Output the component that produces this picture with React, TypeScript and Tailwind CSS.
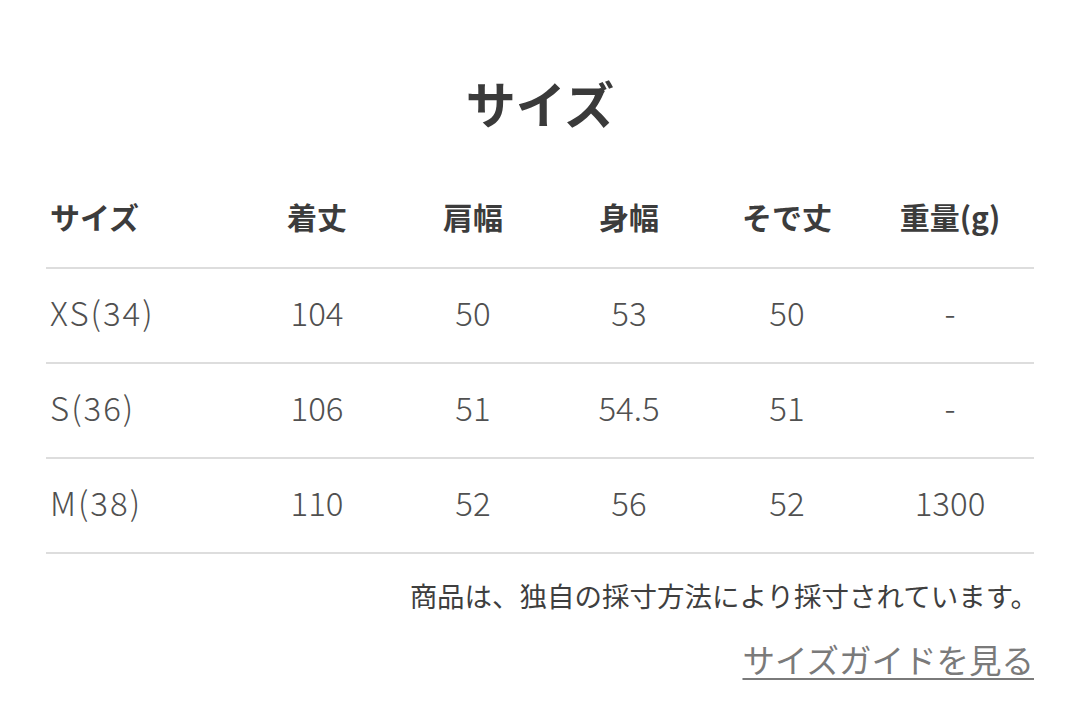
const headers = ["サイズ", "着丈", "肩幅", "身幅", "そで丈", "重量(g)"];

const rows = [
  ["XS(34)", "104", "50", "53", "50", "-"],
  ["S(36)", "106", "51", "54.5", "51", "-"],
  ["M(38)", "110", "52", "56", "52", "1300"],
];

const cols = "grid grid-cols-[192px_158px_154px_158px_158px_1fr]";

const App = () => {
  return (
    <div
      className="min-h-screen w-[1080px] bg-white px-[46px] pt-[71px] text-[#444444]"
      style={{ fontFamily: '"Noto Sans CJK JP", "Noto Sans", sans-serif' }}
    >
      {/* Title */}
      <h1 className="text-center text-[50px] font-bold leading-[62px] text-[#3a3a3a]">
        サイズ
      </h1>

      {/* Size table */}
      <div className="mt-[40px]">
        <div className={`${cols} h-[96px] items-center border-b-2 border-[#dddddd] pb-2`}>
          {headers.map((h, i) => (
            <div
              key={h}
              className={`text-[30px] font-bold text-[#3c3c3c] ${i === 0 ? "pl-1 text-left" : "text-center"}`}
            >
              {h}
            </div>
          ))}
        </div>
        {rows.map((row) => (
          <div
            key={row[0]}
            className={`${cols} h-[95px] items-center border-b-2 border-[#dddddd] pb-[6px]`}
          >
            {row.map((cell, i) => (
              <div
                key={i}
                className={`text-[33px] font-light text-[#505050] ${i === 0 ? "pl-1 text-left tracking-[2px]" : "text-center"}`}
              >
                {cell}
              </div>
            ))}
          </div>
        ))}
      </div>

      {/* Footnote */}
      <p className="mt-[23px] -mr-1 text-right text-[27.5px] leading-[36px] text-[#3f3f3f]">
        商品は、独自の採寸方法により採寸されています。
      </p>

      <div className="mt-[26px] text-right">
        <a
          href="#"
          className="text-[32.5px] leading-[40px] text-[#7a7a7a] underline decoration-2 underline-offset-[5px]"
        >
          サイズガイドを見る
        </a>
      </div>
    </div>
  );
};

export default App;
